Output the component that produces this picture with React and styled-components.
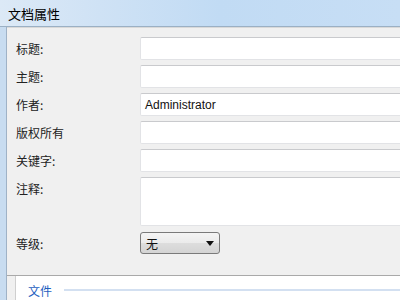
import React from "react";
import styled, { createGlobalStyle } from "styled-components";

const GlobalStyle = createGlobalStyle`
  html, body {
    margin: 0;
    padding: 0;
    width: 400px;
    height: 300px;
    overflow: hidden;
    background: #f0f0f0;
  }
  * {
    box-sizing: border-box;
  }
`;

const Window = styled.div`
  width: 400px;
  height: 300px;
  display: flex;
  flex-direction: column;
  font-family: "Noto Sans CJK SC", "Liberation Sans", sans-serif;
  overflow: hidden;
`;

const TitleBar = styled.div`
  height: 27px;
  flex-shrink: 0;
  display: flex;
  align-items: center;
  padding-left: 8px;
  font-size: 13px;
  color: #000;
  background: linear-gradient(90deg, #dce9f6 0%, #cfe2f5 25%, #c1dbf4 55%, #c7def5 100%);
  border-bottom: 1px solid #9bb0c4;
`;

const Body = styled.div`
  flex: 1;
  display: flex;
  background: #c8dcf0;
  padding-left: 6px;
`;

const Content = styled.div`
  flex: 1;
  display: flex;
  flex-direction: column;
  background: #f0f0f0;
  border-left: 1px solid #9fb2c6;
`;

const FormPanel = styled.div`
  display: grid;
  grid-template-columns: 124px 1fr;
  row-gap: 5px;
  padding: 9px 0 20px 9px;
  border-top: 1px solid #d9d9d9;
  border-bottom: 1px solid #a9a9a9;
  background: #f0f0f0;
`;

const Label = styled.div`
  font-size: 12px;
  line-height: 23px;
  height: 23px;
  color: #222;
  white-space: nowrap;
`;

const Field = styled.div`
  width: 300px;
  height: ${(props) => props.h || "23px"};
  background: #fff;
  border: 1px solid #e2e3e6;
  border-top-color: #c9cacd;
  border-radius: 2px;
  padding: 0 4px;
  display: flex;
  align-items: center;
  font-family: "Liberation Sans", sans-serif;
  font-size: 12px;
  color: #111;
`;

const SelectRow = styled.div`
  margin-top: 1px;
`;

const Select = styled.div`
  width: 80px;
  height: 22px;
  border: 1px solid #7a7a7a;
  border-radius: 3px;
  background: linear-gradient(180deg, #f4f4f4 0%, #ebebeb 50%, #dddddd 51%, #d4d4d4 100%);
  display: flex;
  align-items: center;
  justify-content: space-between;
  padding: 0 4px 0 5px;
  font-size: 12px;
  color: #111;
`;

const Arrow = styled.svg`
  width: 8px;
  height: 5px;
  margin-right: 1px;
`;

const Bottom = styled.div`
  flex: 1;
  padding-left: 8px;
`;

const Card = styled.div`
  height: 100%;
  background: #fff;
  border-left: 1px solid #cfcfcf;
  padding: 6px 0 0 12px;
`;

const GroupTitle = styled.div`
  display: flex;
  align-items: center;
  gap: 12px;
  width: 100%;
  height: 16px;
`;

const GroupText = styled.span`
  font-size: 12px;
  color: #1f5fbf;
  white-space: nowrap;
`;

const GroupLine = styled.div`
  flex: 1;
  height: 2px;
  background: #d3e0f1;
`;

const fields = [
  { label: "标题:", value: "" },
  { label: "主题:", value: "" },
  { label: "作者:", value: "Administrator" },
  { label: "版权所有", value: "" },
  { label: "关键字:", value: "" },
];

export default function App() {
  return (
    <>
      <GlobalStyle />
      <Window>
        <TitleBar>文档属性</TitleBar>
        <Body>
          <Content>
            <FormPanel>
              {fields.map((f) => (
                <React.Fragment key={f.label}>
                  <Label>{f.label}</Label>
                  <Field>{f.value}</Field>
                </React.Fragment>
              ))}
              <Label>注释:</Label>
              <Field h="49px" />
              <Label style={{ marginTop: 1 }}>等级:</Label>
              <SelectRow>
                <Select>
                  <span>无</span>
                  <Arrow viewBox="0 0 8 5">
                    <polygon points="0,0 8,0 4,5" fill="#111" />
                  </Arrow>
                </Select>
              </SelectRow>
            </FormPanel>
            <Bottom>
              <Card>
                <GroupTitle>
                  <GroupText>文件</GroupText>
                  <GroupLine />
                </GroupTitle>
              </Card>
            </Bottom>
          </Content>
        </Body>
      </Window>
    </>
  );
}
